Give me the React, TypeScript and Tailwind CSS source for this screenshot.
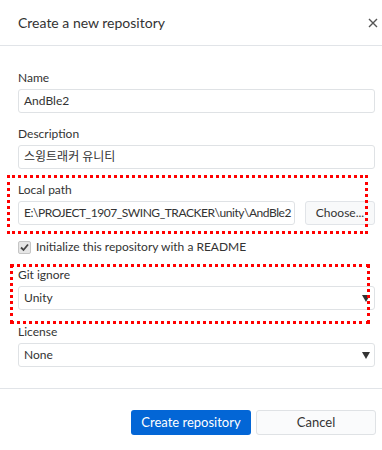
const font = "font-['Segoe_UI','Lato','Noto_Sans_CJK_KR',sans-serif]"

function Label({ children }: { children: React.ReactNode }) {
  return <div className="h-4 text-[12px] leading-4 text-[#333]">{children}</div>
}

function TextBox({ value, className = '' }: { value: string; className?: string }) {
  return (
    <div
      className={`mt-[3px] h-6 flex items-center px-[5px] rounded-[3px] border border-[#dfe2e5] bg-white text-[12px] text-[#333] whitespace-nowrap overflow-hidden ${className}`}
    >
      {value}
    </div>
  )
}

function Select({ value }: { value: string }) {
  return (
    <div className="mt-[3px] h-6 flex items-center justify-between pl-[5px] pr-[4px] rounded-[3px] border border-[#dfe2e5] bg-white text-[12px] text-[#333]">
      <span>{value}</span>
      <svg width="8" height="7" viewBox="0 0 8 7">
        <path d="M0 0 H8 L4 7 Z" fill="#333" />
      </svg>
    </div>
  )
}

export default function App() {
  return (
    <div className={`w-[382px] h-[450px] bg-white overflow-hidden ${font}`}>
      {/* Header */}
      <div className="h-[46px] flex items-center justify-between pl-[18px] pr-[2px] border-b border-[#e1e4e8]">
        <span className="text-[14px] text-[#333]">Create a new repository</span>
        <svg width="10" height="10" viewBox="0 0 10 10" className="mr-[2px]">
          <path d="M1 1 L9 9 M9 1 L1 9" stroke="#555" strokeWidth="1.4" />
        </svg>
      </div>

      {/* Body */}
      <div className="pl-[18px] pr-[7px] pt-6 pb-[21px] border-b border-[#e1e4e8]">
        <div>
          <Label>Name</Label>
          <TextBox value="AndBle2" />
        </div>

        <div className="mt-[13px]">
          <Label>Description</Label>
          <TextBox value="스윙트래커 유니티" />
        </div>

        <div className="relative mt-[13px]">
          <Label>Local path</Label>
          <div className="flex gap-[10px]">
            <TextBox
              value="E:\PROJECT_1907_SWING_TRACKER\unity\AndBle2"
              className="flex-1 min-w-0 tracking-[-0.45px]"
            />
            <div className="mt-[3px] h-6 w-[70px] flex items-center justify-center rounded-[3px] border border-[#e1e4e8] bg-[#f8f9fa] text-[12px] text-[#333]">
              Choose...
            </div>
          </div>
          <div className="absolute top-[-7px] left-[-11px] right-[7px] bottom-[-9px] border-[3px] border-dotted border-[#ff0000]" />
        </div>

        <div className="mt-[14px] h-4 flex items-center gap-[5px] text-[12px] text-[#333]">
          <span className="w-[13px] h-[13px] flex items-center justify-center rounded-[2px] border border-[#c5c5c5] bg-[#e6e6e6]">
            <svg width="9" height="9" viewBox="0 0 9 9">
              <path d="M1 4.5 L3.5 7 L8 1.5" fill="none" stroke="#444" strokeWidth="1.8" />
            </svg>
          </span>
          <span>Initialize this repository with a README</span>
        </div>

        <div className="relative mt-3">
          <Label>Git ignore</Label>
          <Select value="Unity" />
          <div className="absolute top-[-3px] left-[-8px] right-[5px] bottom-[-14px] border-[3px] border-dotted border-[#ff0000]" />
        </div>

        <div className="mt-[14px]">
          <Label>License</Label>
          <Select value="None" />
        </div>
      </div>

      {/* Footer */}
      <div className="flex justify-end gap-[5px] pr-[6px] pt-[21px]">
        <button className="w-[120px] h-[25px] rounded-[3px] bg-[#0366d6] text-white text-[13px]">
          Create repository
        </button>
        <button className="w-[120px] h-[25px] rounded-[3px] border border-[#dfe2e5] bg-[#fafbfc] text-[13px] text-[#333]">
          Cancel
        </button>
      </div>
    </div>
  )
}
